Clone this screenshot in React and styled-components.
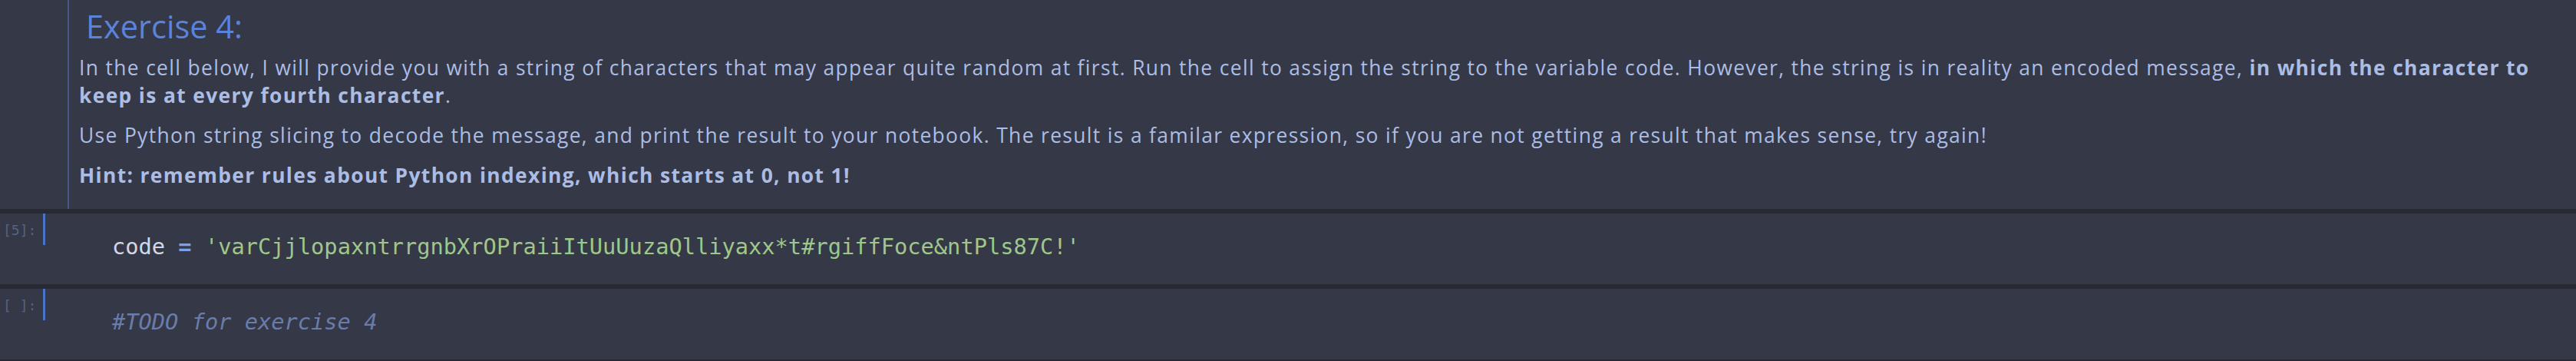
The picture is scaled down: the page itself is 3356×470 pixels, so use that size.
import React from "react";
import styled, { createGlobalStyle } from "styled-components";

const Global = createGlobalStyle`
  html, body { margin: 0; padding: 0; background: #282a33; }
  body { width: 3356px; height: 470px; overflow: hidden; }
`;

const Notebook = styled.div`
  display: flex;
  flex-direction: column;
  gap: 6px;
  background: #282a33;
  padding-bottom: 2px;
`;

const Cell = styled.div`
  display: flex;
  background: #353846;
  min-height: ${(p) => p.$h}px;
`;

const MdGutter = styled.div`
  width: 88px;
  flex: none;
`;

const MdBody = styled.div`
  flex: 1;
  border-left: 2px solid #45588a;
  padding: 8px 2px 24px 13px;
  font-family: "Open Sans", "Noto Sans", sans-serif;
  color: #abbde5;
`;

const Heading = styled.h2`
  margin: 0 0 10px 0;
  padding-left: 9px;
  font-size: 41.5px;
  line-height: 52px;
  font-weight: 400;
  color: #5b83dc;
`;

const Para = styled.p`
  margin: 0 0 16px 0;
  font-size: 26.4px;
  line-height: 36px;
  letter-spacing: 1.35px;
  &:last-child { margin-bottom: 0; }
`;

const Strong = styled.strong`
  font-weight: 700;
`;

const Prompt = styled.div`
  width: 56px;
  flex: none;
  box-sizing: border-box;
  padding: 11px 0 0 4px;
  font-family: "DejaVu Sans Mono", monospace;
  font-size: 18px;
  line-height: 22px;
  color: #56647f;
  white-space: pre;
`;

const ActiveBar = styled.div`
  width: 3px;
  height: 41px;
  flex: none;
  background: #4a73c9;
`;

const Editor = styled.div`
  flex: 1;
  padding: 26px 0 32px 87px;
  font-family: "DejaVu Sans Mono", monospace;
  font-size: 28.7px;
  line-height: 34px;
  white-space: pre;
  color: #d3d6e6;
`;

const Op = styled.span`
  color: #7aa2e6;
  font-weight: 700;
`;

const Str = styled.span`
  color: #9fc78c;
`;

const Comment = styled.span`
  color: #6a7cab;
  font-style: italic;
`;

function CodeCell({ prompt, children }) {
  return (
    <Cell $h={92}>
      <Prompt>{prompt}</Prompt>
      <ActiveBar />
      <Editor>{children}</Editor>
    </Cell>
  );
}

export default function App() {
  return (
    <>
      <Global />
      <Notebook>
        <Cell $h={272}>
          <MdGutter />
          <MdBody>
            <Heading>Exercise 4:</Heading>
            <Para>
              In the cell below, I will provide you with a string of characters that may appear quite random at first. Run the cell to assign the string to the variable code. However, the string is in reality an encoded message,{" "}
              <Strong>in which the character to keep is at every fourth character</Strong>.
            </Para>
            <Para>
              Use Python string slicing to decode the message, and print the result to your notebook. The result is a familar expression, so if you are not getting a result that makes sense, try again!
            </Para>
            <Para>
              <Strong>Hint: remember rules about Python indexing, which starts at 0, not 1!</Strong>
            </Para>
          </MdBody>
        </Cell>
        <CodeCell prompt="[5]:">
          code <Op>=</Op> <Str>'varCjjlopaxntrrgnbXrOPraiiItUuUuzaQlliyaxx*t#rgiffFoce&amp;ntPls87C!'</Str>
        </CodeCell>
        <CodeCell prompt="[ ]:">
          <Comment>#TODO for exercise 4</Comment>
        </CodeCell>
      </Notebook>
    </>
  );
}
